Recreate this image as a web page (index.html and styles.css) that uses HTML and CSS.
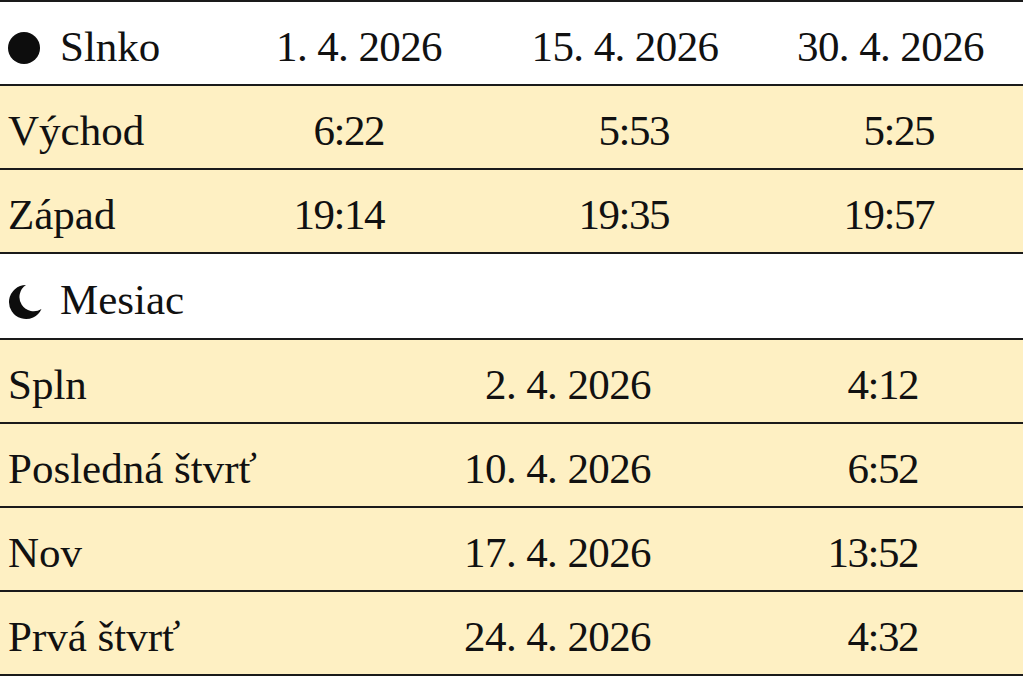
FILE: index.html
```html
<!DOCTYPE html>
<html lang="sk">
<head>
<meta charset="utf-8">
<title>Slnko a Mesiac – apríl 2026</title>
<link rel="stylesheet" href="styles.css">
</head>
<body>
<table class="astro sun">
  <colgroup>
    <col class="c-sun-label"><col class="c-sun-date"><col class="c-sun-date"><col class="c-sun-last">
  </colgroup>
  <tr class="head">
    <th class="label"><span class="name"><span class="sun-dot"></span>Slnko</span></th>
    <th class="date">1. 4. 2026</th>
    <th class="date">15. 4. 2026</th>
    <th class="date">30. 4. 2026</th>
  </tr>
  <tr class="row">
    <td class="label">Východ</td>
    <td class="val s1">6:22</td>
    <td class="val s2">5:53</td>
    <td class="val s3">5:25</td>
  </tr>
  <tr class="row">
    <td class="label">Západ</td>
    <td class="val s1">19:14</td>
    <td class="val s2">19:35</td>
    <td class="val s3">19:57</td>
  </tr>
</table>
<table class="astro moon">
  <colgroup>
    <col class="c-moon-label"><col class="c-moon-date"><col class="c-moon-time">
  </colgroup>
  <tr class="head moon-head">
    <th class="label" colspan="3"><span class="name"><svg class="moon-icon" viewBox="0 0 36 36" aria-hidden="true"><path d="M20 1 A17 17 0 1 0 35.5 25 A14 14 0 0 1 20 1 Z"/></svg>Mesiac</span></th>
  </tr>
  <tr class="row">
    <td class="label">Spln</td>
    <td class="val m1">2. 4. 2026</td>
    <td class="val m2">4:12</td>
  </tr>
  <tr class="row">
    <td class="label">Posledná štvrť</td>
    <td class="val m1">10. 4. 2026</td>
    <td class="val m2">6:52</td>
  </tr>
  <tr class="row">
    <td class="label">Nov</td>
    <td class="val m1">17. 4. 2026</td>
    <td class="val m2">13:52</td>
  </tr>
  <tr class="row">
    <td class="label">Prvá štvrť</td>
    <td class="val m1">24. 4. 2026</td>
    <td class="val m2">4:32</td>
  </tr>
</table>
</body>
</html>
```

FILE: styles.css
```css
html, body {
  margin: 0;
  padding: 0;
  background: #ffffff;
}

body {
  font-family: "Liberation Serif", "Times New Roman", serif;
  font-size: 43px;
  color: #111111;
}

.astro {
  width: 1023px;
  border-collapse: collapse;
  border-spacing: 0;
  table-layout: fixed;
}

.sun {
  border-top: 2px solid #1a1a1a;
}

.c-sun-label { width: 226px; }
.c-sun-date { width: 266px; }
.c-sun-last { width: 265px; }

.c-moon-label { width: 400px; }
.c-moon-date { width: 271px; }
.c-moon-time { width: 352px; }

.astro tr {
  border-bottom: 2px solid #1a1a1a;
}

.astro th,
.astro td {
  padding: 20px 0 12px 0;
  line-height: 50px;
  font-weight: normal;
  white-space: nowrap;
}

.head {
  background: #ffffff;
}

.row {
  background: #fef0c3;
}

.label {
  text-align: left;
  padding-left: 8px !important;
}

.date {
  text-align: center;
  letter-spacing: -0.6px;
}

.val {
  text-align: right;
  letter-spacing: -1.5px;
}

.m1 {
  letter-spacing: -0.6px;
  padding-right: 20px !important;
}

.s1 { padding-right: 108px !important; }
.s2 { padding-right: 89px !important; }
.s3 { padding-right: 89px !important; }

.m2 { padding-right: 105px !important; }

.moon-head th {
  padding-top: 21px;
  padding-bottom: 13px;
}

.name {
  display: flex;
  align-items: center;
}

.sun-dot {
  display: inline-block;
  width: 32px;
  height: 32px;
  border-radius: 50%;
  background: #0d0d0d;
  margin-right: 20px;
  position: relative;
  top: 1px;
}

.moon-icon {
  width: 36px;
  height: 36px;
  margin-left: -2px;
  margin-right: 18px;
  fill: #0d0d0d;
  position: relative;
  top: 2px;
}
```
